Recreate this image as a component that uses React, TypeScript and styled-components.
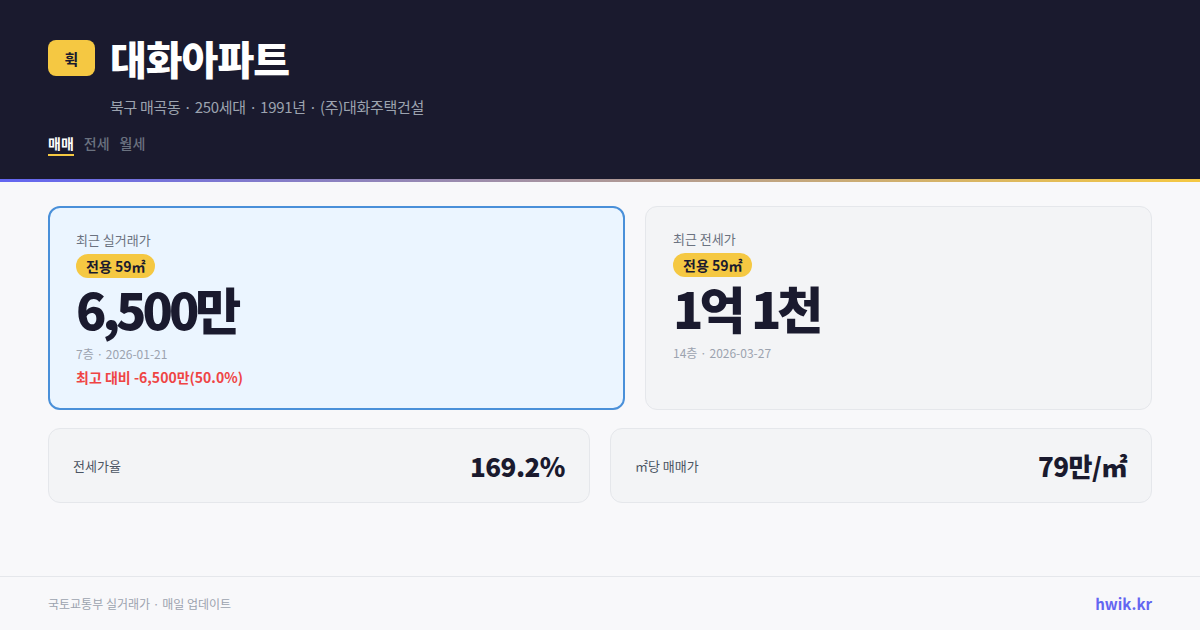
import React from "react";
import styled, { createGlobalStyle } from "styled-components";

const Global = createGlobalStyle`
  html, body { margin: 0; padding: 0; }
  body {
    font-family: "Noto Sans CJK KR", "Noto Sans", sans-serif;
    background: #f8f8fa;
    -webkit-font-smoothing: antialiased;
  }
  * { box-sizing: border-box; }
`;

const Page = styled.div`
  width: 1200px;
  height: 630px;
  display: flex;
  flex-direction: column;
  background: #f8f8fa;
  overflow: hidden;
`;

const Header = styled.header`
  background: #1a1a2e;
  padding: 34px 48px 0;
  height: 179px;
  display: flex;
  flex-direction: column;
`;

const TitleRow = styled.div`
  display: flex;
  align-items: center;
  gap: 15px;
`;

const LogoBadge = styled.div`
  width: 47px;
  height: 36px;
  border-radius: 8px;
  background: #f5c842;
  color: #1a1a2e;
  font-size: 15px;
  font-weight: 700;
  display: flex;
  align-items: center;
  justify-content: center;
`;

const Title = styled.h1`
  margin: 0;
  color: #ffffff;
  font-size: 40px;
  font-weight: 900;
  line-height: 48px;
  letter-spacing: -1px;
`;

const Subtitle = styled.div`
  margin: 15px 0 0 62px;
  color: #9ca3af;
  font-size: 15px;
  line-height: 20px;
  letter-spacing: -0.3px;
`;

const Tabs = styled.nav`
  display: flex;
  gap: 10px;
  margin-top: 16px;
`;

const Tab = styled.span<{ $active?: boolean }>`
  font-size: 14px;
  line-height: 20px;
  font-weight: ${(p) => (p.$active ? 700 : 500)};
  color: ${(p) => (p.$active ? "#ffffff" : "#6b7280")};
  padding-bottom: 1px;
  border-bottom: 2px solid ${(p) => (p.$active ? "#f5c842" : "transparent")};
`;

const GradientBar = styled.div`
  height: 3px;
  background: linear-gradient(90deg, #6366f1 0%, #f5c842 100%);
`;

const Main = styled.main`
  flex: 1;
  padding: 24px 48px 0;
  display: flex;
  flex-direction: column;
  gap: 18px;
`;

const TopGrid = styled.div`
  display: grid;
  grid-template-columns: 577fr 507fr;
  gap: 20px;
`;

const PriceCard = styled.div<{ $highlight?: boolean }>`
  border-radius: 12px;
  background: ${(p) => (p.$highlight ? "#ebf5ff" : "#f3f4f6")};
  border: ${(p) => (p.$highlight ? "2px solid #4a90d9" : "1px solid #e5e7eb")};
  padding: ${(p) => (p.$highlight ? "23px 26px 20px" : "23px 27px 20px")};
  display: flex;
  flex-direction: column;
  align-items: flex-start;
  height: 204px;
`;

const CardLabel = styled.div`
  font-size: 13px;
  line-height: 18px;
  color: #6b7280;
`;

const AreaBadge = styled.span`
  margin-top: 5px;
  background: #f5c842;
  color: #1a1a2e;
  font-size: 14px;
  font-weight: 700;
  line-height: 24px;
  padding: 0 10px;
  border-radius: 12px;
`;

const BigPrice = styled.div`
  margin-top: 3px;
  font-size: 50px;
  font-weight: 900;
  line-height: 54px;
  color: #1a1a2e;
  letter-spacing: -4px;
  word-spacing: 2px;
`;

const Meta = styled.div`
  margin-top: 10px;
  font-size: 12px;
  line-height: 18px;
  color: #9ca3af;
`;

const Diff = styled.div`
  margin-top: 4px;
  font-size: 14px;
  line-height: 20px;
  font-weight: 700;
  color: #ef4444;
`;

const BottomGrid = styled.div`
  display: grid;
  grid-template-columns: 1fr 1fr;
  gap: 20px;
`;

const StatCard = styled.div`
  height: 75px;
  border-radius: 12px;
  background: #f3f4f6;
  border: 1px solid #e5e7eb;
  padding: 0 24px;
  display: flex;
  align-items: center;
  justify-content: space-between;
`;

const StatLabel = styled.span`
  font-size: 13px;
  color: #4b5563;
`;

const StatValue = styled.span`
  font-size: 26px;
  font-weight: 800;
  color: #1a1a2e;
  letter-spacing: -0.5px;
`;

const Footer = styled.footer`
  height: 54px;
  border-top: 1px solid #e5e7eb;
  padding: 0 48px;
  display: flex;
  align-items: center;
  justify-content: space-between;
`;

const FooterText = styled.span`
  font-size: 12px;
  color: #9ca3af;
`;

const Brand = styled.span`
  font-size: 15px;
  font-weight: 700;
  color: #6366f1;
`;

export default function App() {
  return (
    <Page>
      <Global />
      <Header>
        <TitleRow>
          <LogoBadge>휙</LogoBadge>
          <Title>대화아파트</Title>
        </TitleRow>
        <Subtitle>북구 매곡동 · 250세대 · 1991년 · (주)대화주택건설</Subtitle>
        <Tabs>
          <Tab $active>매매</Tab>
          <Tab>전세</Tab>
          <Tab>월세</Tab>
        </Tabs>
      </Header>
      <GradientBar />
      <Main>
        <TopGrid>
          <PriceCard $highlight>
            <CardLabel>최근 실거래가</CardLabel>
            <AreaBadge>전용 59㎡</AreaBadge>
            <BigPrice>6,500만</BigPrice>
            <Meta>7층 · 2026-01-21</Meta>
            <Diff>최고 대비 -6,500만(50.0%)</Diff>
          </PriceCard>
          <PriceCard>
            <CardLabel>최근 전세가</CardLabel>
            <AreaBadge>전용 59㎡</AreaBadge>
            <BigPrice>1억 1천</BigPrice>
            <Meta>14층 · 2026-03-27</Meta>
          </PriceCard>
        </TopGrid>
        <BottomGrid>
          <StatCard>
            <StatLabel>전세가율</StatLabel>
            <StatValue>169.2%</StatValue>
          </StatCard>
          <StatCard>
            <StatLabel>㎡당 매매가</StatLabel>
            <StatValue>79만/㎡</StatValue>
          </StatCard>
        </BottomGrid>
      </Main>
      <Footer>
        <FooterText>국토교통부 실거래가 · 매일 업데이트</FooterText>
        <Brand>hwik.kr</Brand>
      </Footer>
    </Page>
  );
}
